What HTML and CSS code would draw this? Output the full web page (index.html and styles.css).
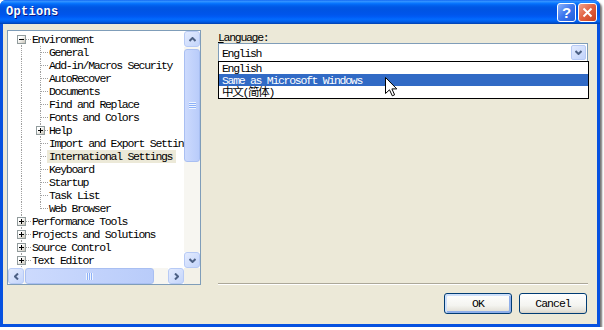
FILE: index.html
```html
<!DOCTYPE html>
<html lang="en">
<head>
    <meta charset="UTF-8">
    <title>Options</title>
    <link rel="stylesheet" href="styles.css">
</head>
<body>
    <div class="window">
        <!-- Title bar -->
        <div class="titlebar">
            <span class="title">Options</span>
            <div class="caption-buttons">
                <div class="cap help">?</div>
                <div class="cap close">
                    <svg width="11" height="11" viewBox="0 0 11 11"><path d="M1.5 1.5 L9.5 9.5 M9.5 1.5 L1.5 9.5" stroke="#fff" stroke-width="2"/></svg>
                </div>
            </div>
        </div>

        <div class="client">
            <div class="main">
                <!-- Category tree -->
                <div class="tree-box">
                    <div class="tree-body">
                        <div class="tree">
                            <div class="row"><span class="cell f"><span class="box"></span></span><span class="text">Environment</span></div>
                            <div class="row"><span class="cell i"></span><span class="cell t"></span><span class="text">General</span></div>
                            <div class="row"><span class="cell i"></span><span class="cell t"></span><span class="text">Add-in/Macros Security</span></div>
                            <div class="row"><span class="cell i"></span><span class="cell t"></span><span class="text">AutoRecover</span></div>
                            <div class="row"><span class="cell i"></span><span class="cell t"></span><span class="text">Documents</span></div>
                            <div class="row"><span class="cell i"></span><span class="cell t"></span><span class="text">Find and Replace</span></div>
                            <div class="row"><span class="cell i"></span><span class="cell t"></span><span class="text">Fonts and Colors</span></div>
                            <div class="row"><span class="cell i"></span><span class="cell t"><span class="box plus"></span></span><span class="text">Help</span></div>
                            <div class="row"><span class="cell i"></span><span class="cell t"></span><span class="text">Import and Export Settings</span></div>
                            <div class="row"><span class="cell i"></span><span class="cell t"></span><span class="text selected">International Settings</span></div>
                            <div class="row"><span class="cell i"></span><span class="cell t"></span><span class="text">Keyboard</span></div>
                            <div class="row"><span class="cell i"></span><span class="cell t"></span><span class="text">Startup</span></div>
                            <div class="row"><span class="cell i"></span><span class="cell t"></span><span class="text">Task List</span></div>
                            <div class="row"><span class="cell i"></span><span class="cell l"></span><span class="text">Web Browser</span></div>
                            <div class="row"><span class="cell t"><span class="box plus"></span></span><span class="text">Performance Tools</span></div>
                            <div class="row"><span class="cell t"><span class="box plus"></span></span><span class="text">Projects and Solutions</span></div>
                            <div class="row"><span class="cell t"><span class="box plus"></span></span><span class="text">Source Control</span></div>
                            <div class="row"><span class="cell t"><span class="box plus"></span></span><span class="text">Text Editor</span></div>
                        </div>
                        <div class="vscroll">
                            <div class="sb-btn">
                                <svg width="7" height="5" viewBox="0 0 7 5"><path d="M0.5 4 L3.5 1 L6.5 4" stroke="#4D6185" stroke-width="2" fill="none"/></svg>
                            </div>
                            <div class="sb-track">
                                <div class="sb-thumb v"><span class="grip v"></span></div>
                            </div>
                            <div class="sb-btn">
                                <svg width="7" height="5" viewBox="0 0 7 5"><path d="M0.5 1 L3.5 4 L6.5 1" stroke="#4D6185" stroke-width="2" fill="none"/></svg>
                            </div>
                        </div>
                    </div>
                    <div class="hscroll-row">
                        <div class="hscroll">
                            <div class="sb-btn">
                                <svg width="5" height="7" viewBox="0 0 5 7"><path d="M4 0.5 L1 3.5 L4 6.5" stroke="#4D6185" stroke-width="2" fill="none"/></svg>
                            </div>
                            <div class="sb-track h">
                                <div class="sb-thumb h"><span class="grip h"></span></div>
                            </div>
                            <div class="sb-btn">
                                <svg width="5" height="7" viewBox="0 0 5 7"><path d="M1 0.5 L4 3.5 L1 6.5" stroke="#4D6185" stroke-width="2" fill="none"/></svg>
                            </div>
                        </div>
                        <div class="corner"></div>
                    </div>
                </div>

                <!-- Settings page -->
                <div class="page">
                    <div class="field-label"><u>L</u>anguage:</div>
                    <div class="combo-wrap">
                        <div class="combo">
                            <span class="value">English</span>
                            <div class="drop-btn">
                                <svg width="7" height="5" viewBox="0 0 7 5"><path d="M0.5 1 L3.5 4 L6.5 1" stroke="#4D6185" stroke-width="2" fill="none"/></svg>
                            </div>
                        </div>
                        <ul class="droplist">
                            <li>English</li>
                            <li class="sel">Same as Microsoft Windows</li>
                            <li>中文(简体)</li>
                        </ul>
                        <svg class="cursor" width="13" height="20" viewBox="0 0 13 20">
                            <path d="M0.5 0.5 L0.5 16.5 L4.5 12.8 L7.3 18.8 L9.6 17.8 L6.9 11.9 L11.8 11.9 Z" fill="#fff" stroke="#000" stroke-width="1"/>
                        </svg>
                    </div>
                    <div class="separator"></div>
                </div>
            </div>

            <div class="footer">
                <button class="btn default">OK</button>
                <button class="btn">Cancel</button>
            </div>
        </div>
    </div>
</body>
</html>
```

FILE: styles.css
```css
* {
    box-sizing: border-box;
}

body {
    margin: 0;
    background-color: #ffffff;
    font-family: "Liberation Mono", "Noto Sans CJK SC", monospace;
    font-size: 11.5px;
    letter-spacing: -1.3px;
    color: #000;
}

/* Window frame */
.window {
    width: 600px;
    height: 327px;
    display: flex;
    flex-direction: column;
    background-color: #0651E0;
    border-radius: 6px 6px 0 0;
    box-shadow: 2px 2px 2px rgba(0, 0, 0, 0.55);
}

.titlebar {
    height: 24px;
    flex: none;
    display: flex;
    align-items: center;
    justify-content: space-between;
    padding-left: 6px;
    border-radius: 6px 6px 0 0;
    background: linear-gradient(to bottom,
        #0058EE 0%, #3A93FF 4%, #288EFF 8%, #127DFF 12%, #036FFC 16%,
        #0262EE 22%, #0057E5 30%, #0054E3 40%, #0055EB 60%, #005BF5 70%,
        #026AFE 80%, #0062EF 88%, #0052D6 94%, #0040AB 100%);
}

.title {
    color: #fff;
    font-weight: bold;
    font-size: 12px;
    letter-spacing: 0.3px;
    text-shadow: 1px 1px 0 #0A1883;
}

.caption-buttons {
    display: flex;
    gap: 2px;
    margin-right: 3px;
}

.cap {
    width: 19px;
    height: 19px;
    border: 1px solid #fff;
    border-radius: 3px;
    display: flex;
    align-items: center;
    justify-content: center;
}

.help {
    background: linear-gradient(135deg, #8DB2FA 0%, #3B75EE 50%, #245DDB 100%);
    color: #fff;
    font-family: "Liberation Sans", sans-serif;
    font-weight: bold;
    font-size: 15px;
    letter-spacing: 0;
}

.close {
    background: linear-gradient(135deg, #F0A08A 0%, #E1603F 50%, #C8401F 100%);
}

/* Client area */
.client {
    flex: 1;
    margin: 0 3px 3px;
    background-color: #ECE9D8;
    padding: 6px 9px 0 4px;
    display: flex;
    flex-direction: column;
}

.main {
    display: grid;
    grid-template-columns: 194px 1fr;
    column-gap: 17px;
    height: 255px;
}

/* Tree view */
.tree-box {
    border: 1px solid #7F9DB9;
    background-color: #fff;
    display: flex;
    flex-direction: column;
}

.tree-body {
    display: flex;
    height: 237px;
}

.tree {
    flex: 1;
    overflow: hidden;
    padding: 2px 0 0 4px;
    white-space: nowrap;
    --dots-v: repeating-linear-gradient(to bottom, #A0A0A0 0 1px, transparent 1px 2px);
    --dots-h: repeating-linear-gradient(to right, #A0A0A0 0 1px, transparent 1px 2px);
}

.row {
    display: flex;
    align-items: center;
    height: 13px;
}

.cell {
    width: 19px;
    height: 13px;
    flex: none;
    display: flex;
    align-items: center;
    justify-content: center;
    background-repeat: no-repeat;
}

.cell + .cell {
    width: 17px;
    justify-content: flex-start;
    padding-left: 5px;
}

.cell.i {
    background-image: var(--dots-v);
    background-position: 9px 0;
    background-size: 1px 13px;
}

.cell.t {
    background-image: var(--dots-v), var(--dots-h);
    background-position: 9px 0, 10px 6px;
    background-size: 1px 13px, 9px 1px;
}

.cell.l {
    background-image: var(--dots-v), var(--dots-h);
    background-position: 9px 0, 10px 6px;
    background-size: 1px 7px, 9px 1px;
}

.cell.f {
    background-image: var(--dots-v), var(--dots-h);
    background-position: 9px 6px, 10px 6px;
    background-size: 1px 7px, 9px 1px;
}

.box {
    width: 9px;
    height: 9px;
    flex: none;
    border: 1px solid #919B9C;
    background:
        linear-gradient(#000, #000) center / 5px 1px no-repeat,
        linear-gradient(135deg, #fff 30%, #C8C4B8);
}

.box.plus {
    background:
        linear-gradient(#000, #000) center / 5px 1px no-repeat,
        linear-gradient(#000, #000) center / 1px 5px no-repeat,
        linear-gradient(135deg, #fff 30%, #C8C4B8);
}

.text {
    margin-left: 1px;
    line-height: 13px;
}

.text.selected {
    margin-left: -1px;
    padding: 0 4px 0 2px;
    background-color: #ECE9D8;
}

/* Scrollbars */
.vscroll {
    width: 16px;
    display: flex;
    flex-direction: column;
}

.sb-btn {
    width: 16px;
    height: 16px;
    flex: none;
    display: flex;
    align-items: center;
    justify-content: center;
    border: 1px solid #B7CAF5;
    border-radius: 3px;
    background: linear-gradient(135deg, #E3EBFE, #C4D5FB);
}

.sb-track {
    flex: 1;
    background-color: #F7F6F1;
}

.sb-thumb {
    border: 1px solid #A9BFF2;
    border-radius: 3px;
    background: linear-gradient(to right, #CCDAFD, #B9CCFA);
    display: flex;
    align-items: center;
    justify-content: center;
}

.sb-thumb.v {
    margin-top: 2px;
    height: 113px;
}

.grip.v {
    width: 7px;
    height: 7px;
    background: repeating-linear-gradient(to bottom, #EEF4FE 0 1px, #8CB0F8 1px 2px);
}

.hscroll-row {
    display: flex;
    height: 16px;
}

.hscroll {
    flex: 1;
    display: flex;
}

.sb-track.h {
    display: flex;
}

.sb-thumb.h {
    margin-left: 1px;
    width: 129px;
}

.grip.h {
    width: 7px;
    height: 7px;
    background: repeating-linear-gradient(to right, #EEF4FE 0 1px, #8CB0F8 1px 2px);
}

.corner {
    width: 16px;
    background-color: #F3F1E8;
}

/* Settings page */
.page {
    display: flex;
    flex-direction: column;
}

.field-label {
    height: 13px;
    line-height: 15px;
}

.combo-wrap {
    position: relative;
}

.combo {
    height: 19px;
    border: 1px solid #7F9DB9;
    background-color: #fff;
    display: flex;
    align-items: center;
    padding-left: 3px;
}

.combo .value {
    flex: 1;
    padding-top: 2px;
}

.drop-btn {
    width: 15px;
    height: 15px;
    margin-right: 1px;
    display: flex;
    align-items: center;
    justify-content: center;
    border: 1px solid #B7CAF5;
    border-radius: 2px;
    background: linear-gradient(135deg, #E3EBFE, #C1D3FB);
}

.droplist {
    position: absolute;
    left: 0;
    right: -1px;
    top: 18px;
    margin: 0;
    padding: 0;
    list-style: none;
    border: 1px solid #000;
    background-color: #fff;
}

.droplist li {
    height: 12px;
    line-height: 14px;
    padding-left: 3px;
}

.droplist li.sel {
    background-color: #316AC5;
    color: #fff;
}

.cursor {
    position: absolute;
    left: 167px;
    top: 34px;
}

.separator {
    margin-top: auto;
    border-top: 1px solid #ACA899;
    border-bottom: 1px solid #fff;
}

/* Dialog buttons */
.footer {
    display: flex;
    justify-content: flex-end;
    gap: 7px;
    margin-top: 8px;
    padding-right: 1px;
}

.btn {
    width: 68px;
    height: 21px;
    padding: 0;
    border: 1px solid #003C74;
    border-radius: 3px;
    background: linear-gradient(to bottom, #FFFFFF, #F4F4F0 60%, #E3E1D8 90%, #D6D0C5);
    font: inherit;
    letter-spacing: -1px;
    color: #000;
}

.btn.default {
    box-shadow: inset 1px 1px 0 1px #CEE0FB, inset -1px -1px 0 1px #8FAFEA;
}
```
